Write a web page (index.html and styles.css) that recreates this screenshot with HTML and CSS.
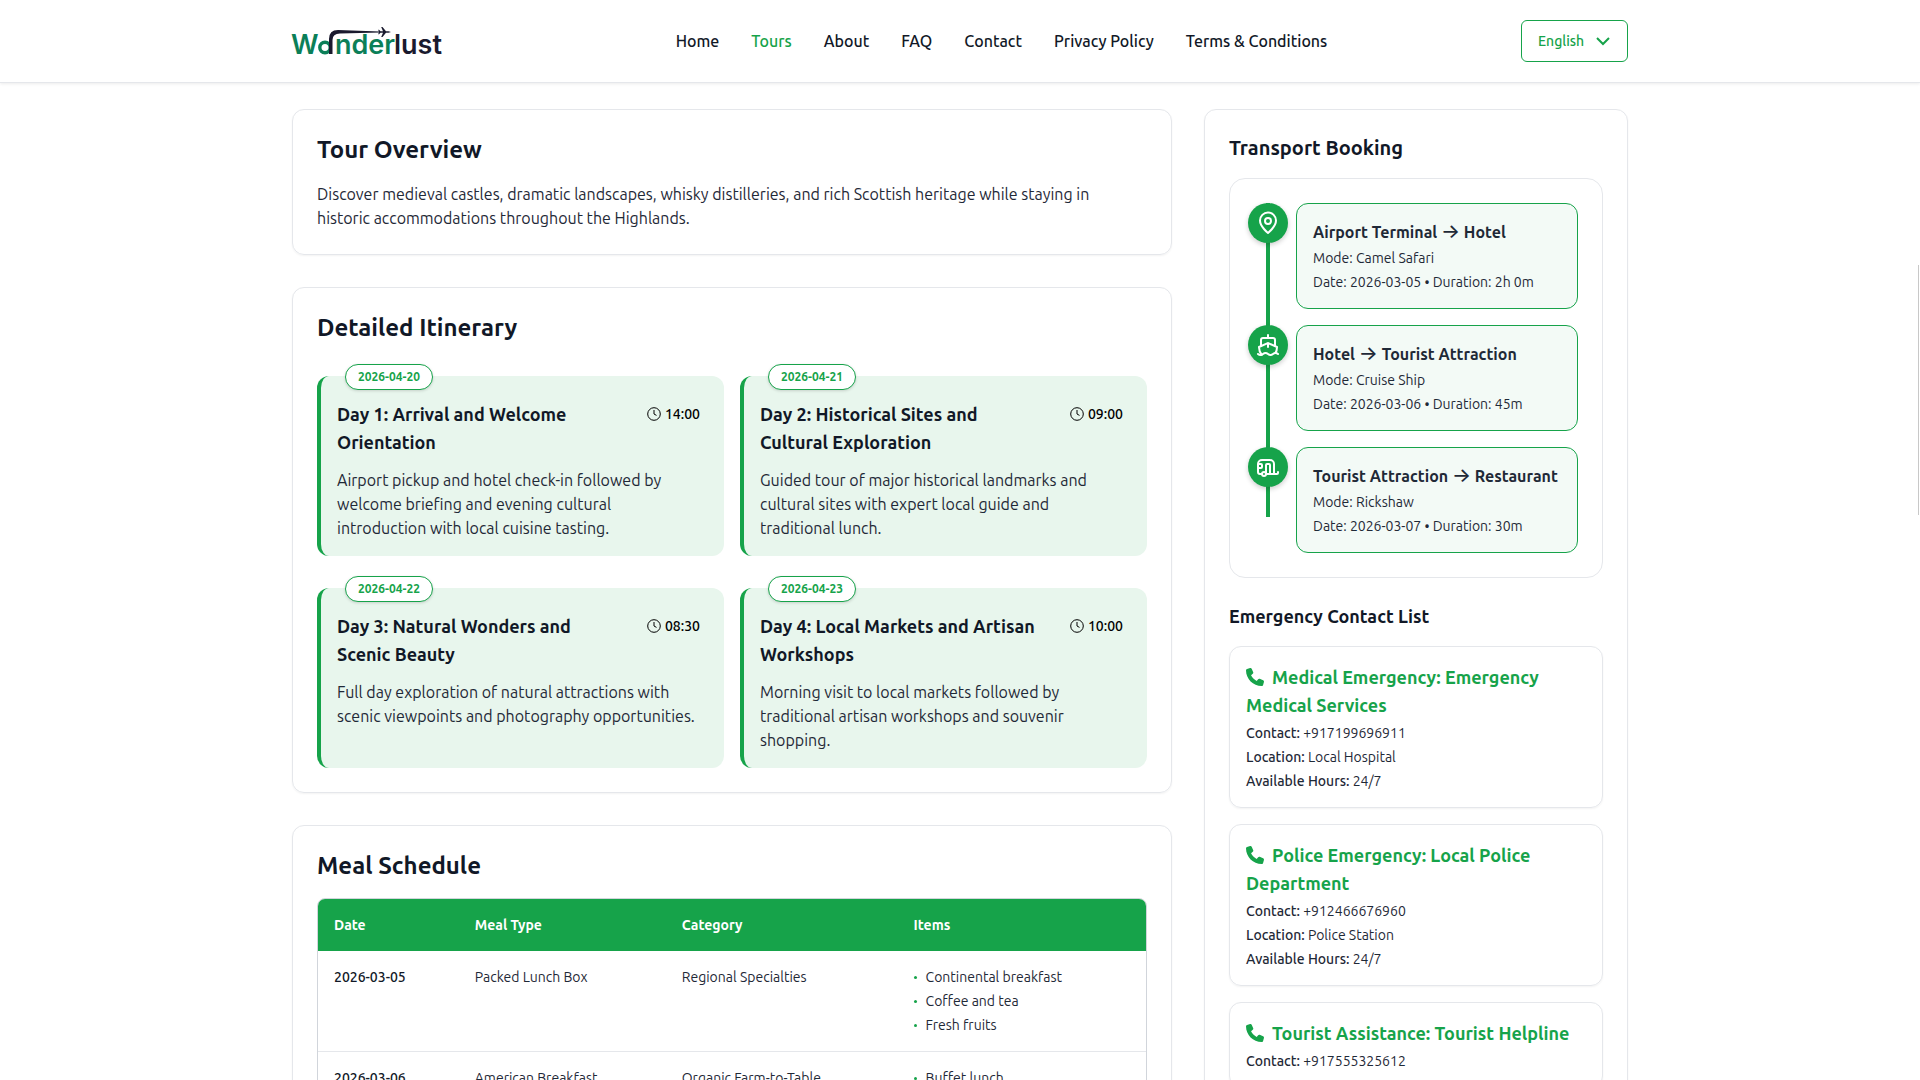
FILE: index.html
```html
<!DOCTYPE html>
<html lang="en">
  <head>
    <meta charset="UTF-8" />
    <meta name="viewport" content="width=device-width, initial-scale=1.0" />
    <title>Wanderlust - Tour Details</title>
    <link rel="stylesheet" href="styles.css">
  </head>
  <body>
    <!-- Header -->
    <header class="header">
      <div class="container header-inner">
        <a class="logo" href="#" aria-label="Wanderlust">
          <svg width="190" height="42" viewBox="0 0 190 42">
            <text class="logo-green" x="-1" y="34">W</text>
            <text class="logo-green" x="43" y="34">nder</text>
            <text class="logo-dark" x="102" y="34">lust</text>
            <circle cx="33" cy="27.500" r="5.200" fill="none" stroke="#0b7f58" stroke-width="3.400" />
            <path d="M37 34V19Q37 10 46 10L88 11.600V12.400L48 13.500Q40.500 13.500 40.500 20V34Z" fill="#1a1a2e" />
            <path d="M99 12L96.500 11.200H94L90.500 7H89.200L91 11.200H88.500L87 9.800H86.200L87 12L86.200 14.200H87L88.500 12.800H91L89.200 17H90.500L94 12.800H96.500Z" fill="#1a1a2e" />
          </svg>
        </a>
        <nav class="nav">
          <a href="#">Home</a>
          <a href="#" class="active">Tours</a>
          <a href="#">About</a>
          <a href="#">FAQ</a>
          <a href="#">Contact</a>
          <a href="#">Privacy Policy</a>
          <a href="#">Terms &amp; Conditions</a>
        </nav>
        <label class="language">
          <select class="language-select" aria-label="Language">
            <option>English</option>
          </select>
          <svg class="chevron" width="16" height="16" viewBox="0 0 16 16"><path d="M2 5l6 6 6-6" /></svg>
        </label>
      </div>
    </header>

    <main class="container layout">
      <div class="main-column">
        <section class="card">
          <h2>Tour Overview</h2>
          <p class="overview">Discover medieval castles, dramatic landscapes, whisky distilleries, and rich Scottish heritage while staying in historic accommodations throughout the Highlands.</p>
        </section>

        <!-- Itinerary -->
        <section class="card">
          <h2>Detailed Itinerary</h2>
          <div class="itinerary">
            <article class="day">
              <span class="day-date">2026-04-20</span>
              <div class="day-head">
                <h3>Day 1: Arrival and Welcome Orientation</h3>
                <span class="day-time">
                  <svg class="clock" width="14" height="14" viewBox="0 0 14 14"><circle cx="7" cy="7" r="6.300" /><path d="M7 3v4l2.500 1.400" /></svg>
                  14:00
                </span>
              </div>
              <p>Airport pickup and hotel check-in followed by welcome briefing and evening cultural introduction with local cuisine tasting.</p>
            </article>
            <article class="day">
              <span class="day-date">2026-04-21</span>
              <div class="day-head">
                <h3>Day 2: Historical Sites and Cultural Exploration</h3>
                <span class="day-time">
                  <svg class="clock" width="14" height="14" viewBox="0 0 14 14"><circle cx="7" cy="7" r="6.300" /><path d="M7 3v4l2.500 1.400" /></svg>
                  09:00
                </span>
              </div>
              <p>Guided tour of major historical landmarks and cultural sites with expert local guide and traditional lunch.</p>
            </article>
            <article class="day">
              <span class="day-date">2026-04-22</span>
              <div class="day-head">
                <h3>Day 3: Natural Wonders and Scenic Beauty</h3>
                <span class="day-time">
                  <svg class="clock" width="14" height="14" viewBox="0 0 14 14"><circle cx="7" cy="7" r="6.300" /><path d="M7 3v4l2.500 1.400" /></svg>
                  08:30
                </span>
              </div>
              <p>Full day exploration of natural attractions with scenic viewpoints and photography opportunities.</p>
            </article>
            <article class="day">
              <span class="day-date">2026-04-23</span>
              <div class="day-head">
                <h3>Day 4: Local Markets and Artisan Workshops</h3>
                <span class="day-time">
                  <svg class="clock" width="14" height="14" viewBox="0 0 14 14"><circle cx="7" cy="7" r="6.300" /><path d="M7 3v4l2.500 1.400" /></svg>
                  10:00
                </span>
              </div>
              <p>Morning visit to local markets followed by traditional artisan workshops and souvenir shopping.</p>
            </article>
          </div>
        </section>

        <!-- Meals -->
        <section class="card">
          <h2>Meal Schedule</h2>
          <div class="table-wrap">
            <table class="meals">
              <thead>
                <tr>
                  <th class="col-date">Date</th>
                  <th class="col-type">Meal Type</th>
                  <th class="col-category">Category</th>
                  <th>Items</th>
                </tr>
              </thead>
              <tbody>
                <tr>
                  <td class="meal-date">2026-03-05</td>
                  <td>Packed Lunch Box</td>
                  <td>Regional Specialties</td>
                  <td>
                    <ul>
                      <li>Continental breakfast</li>
                      <li>Coffee and tea</li>
                      <li>Fresh fruits</li>
                    </ul>
                  </td>
                </tr>
                <tr>
                  <td class="meal-date">2026-03-06</td>
                  <td>American Breakfast</td>
                  <td>Organic Farm-to-Table</td>
                  <td>
                    <ul>
                      <li>Buffet lunch</li>
                    </ul>
                  </td>
                </tr>
              </tbody>
            </table>
          </div>
        </section>
      </div>

      <!-- Sidebar -->
      <aside class="card sidebar">
        <h2>Transport Booking</h2>
        <div class="transport">
          <ol class="timeline">
            <li>
              <span class="stop-icon">
                <svg width="24" height="24" viewBox="0 0 24 24"><path d="M12 22s8-6.500 8-12.500a8 8 0 0 0-16 0C4 15.500 12 22 12 22z" /><circle cx="12" cy="10" r="3" /></svg>
              </span>
              <div class="stop">
                <h3>Airport Terminal <span class="arrow">→</span> Hotel</h3>
                <p>Mode: Camel Safari</p>
                <p>Date: 2026-03-05 • Duration: 2h 0m</p>
              </div>
            </li>
            <li>
              <span class="stop-icon">
                <svg width="24" height="24" viewBox="0 0 24 24"><path d="M12 10.200V14M12 2v3M19 13V7a2 2 0 0 0-2-2H7a2 2 0 0 0-2 2v6" /><path d="M19.400 20A11.600 11.600 0 0 0 21 14l-8.200-3.600a2 2 0 0 0-1.600 0L3 14a11.600 11.600 0 0 0 2.800 7.800" /><path d="M2 21c.6.500 1.200 1 2.500 1 2.500 0 2.500-2 5-2 1.300 0 1.900.5 2.500 1s1.200 1 2.500 1c2.500 0 2.500-2 5-2 1.300 0 1.900.5 2.500 1" /></svg>
              </span>
              <div class="stop">
                <h3>Hotel <span class="arrow">→</span> Tourist Attraction</h3>
                <p>Mode: Cruise Ship</p>
                <p>Date: 2026-03-06 • Duration: 45m</p>
              </div>
            </li>
            <li>
              <span class="stop-icon">
                <svg width="24" height="24" viewBox="0 0 24 24"><path d="M18 19V9a4 4 0 0 0-4-4H6a4 4 0 0 0-4 4v8a2 2 0 0 0 2 2h2M2 9h3a1 1 0 0 1 1 1v2a1 1 0 0 1-1 1H2M22 17v1a1 1 0 0 1-1 1H10v-9a1 1 0 0 1 1-1h2a1 1 0 0 1 1 1v9" /><circle cx="8" cy="19" r="2" /></svg>
              </span>
              <div class="stop">
                <h3>Tourist Attraction <span class="arrow">→</span> Restaurant</h3>
                <p>Mode: Rickshaw</p>
                <p>Date: 2026-03-07 • Duration: 30m</p>
              </div>
            </li>
          </ol>
        </div>

        <h3 class="contacts-title">Emergency Contact List</h3>
        <div class="contacts">
          <article class="contact">
            <h4><svg class="phone" width="18" height="18" viewBox="0 0 512 512"><path d="M165 25c-8-19-28-29-48-23L29 26C12 30 0 46 0 64c0 247 201 448 448 448 18 0 34-12 38-29l24-88c6-20-4-40-23-48l-96-40c-16-7-35-2-46 12l-41 49c-70-33-127-90-160-160l49-41c14-11 19-30 12-46z" /></svg>Medical Emergency: Emergency Medical Services</h4>
            <p><strong>Contact:</strong> +917199696911</p>
            <p><strong>Location:</strong> Local Hospital</p>
            <p><strong>Available Hours:</strong> 24/7</p>
          </article>
          <article class="contact">
            <h4><svg class="phone" width="18" height="18" viewBox="0 0 512 512"><path d="M165 25c-8-19-28-29-48-23L29 26C12 30 0 46 0 64c0 247 201 448 448 448 18 0 34-12 38-29l24-88c6-20-4-40-23-48l-96-40c-16-7-35-2-46 12l-41 49c-70-33-127-90-160-160l49-41c14-11 19-30 12-46z" /></svg>Police Emergency: Local Police Department</h4>
            <p><strong>Contact:</strong> +912466676960</p>
            <p><strong>Location:</strong> Police Station</p>
            <p><strong>Available Hours:</strong> 24/7</p>
          </article>
          <article class="contact">
            <h4><svg class="phone" width="18" height="18" viewBox="0 0 512 512"><path d="M165 25c-8-19-28-29-48-23L29 26C12 30 0 46 0 64c0 247 201 448 448 448 18 0 34-12 38-29l24-88c6-20-4-40-23-48l-96-40c-16-7-35-2-46 12l-41 49c-70-33-127-90-160-160l49-41c14-11 19-30 12-46z" /></svg>Tourist Assistance: Tourist Helpline</h4>
            <p><strong>Contact:</strong> +917555325612</p>
          </article>
        </div>
      </aside>
    </main>
    <div class="scroll-thumb"></div>
  </body>
</html>
```
FILE: styles.css
```css
* {
  box-sizing: border-box;
  margin: 0;
  padding: 0;
}

body {
  height: 100vh;
  overflow: hidden;
  background-color: #fff;
  color: #1f2937;
  font-family: Ubuntu, "Noto Sans", sans-serif;
  font-size: 16px;
  line-height: 24px;
}

a {
  color: inherit;
  text-decoration: none;
}

ul,
ol {
  list-style: none;
}

.container {
  max-width: 1400px;
  margin: 0 auto;
  padding: 0 32px;
}

/* Header */
.header {
  border-bottom: 1px solid #e5e7eb;
  box-shadow: 0 1px 3px rgba(0, 0, 0, 0.08);
}

.header-inner {
  display: flex;
  align-items: center;
  justify-content: space-between;
  padding-top: 20px;
  padding-bottom: 20px;
}

.logo {
  display: flex;
}

.logo svg {
  overflow: visible;
}

.logo text {
  font-family: Inter, sans-serif;
  font-size: 27px;
  font-weight: 600;
}

.logo-green {
  fill: #0b7f58;
}

.logo-dark {
  fill: #1a1a2e;
}

.nav {
  display: flex;
  gap: 32px;
  color: #111827;
  font-weight: 500;
}

.nav .active {
  color: #16a34a;
}

.language {
  display: flex;
  align-items: center;
  gap: 10px;
  height: 42px;
  padding: 0 16px;
  border: 1px solid #16a34a;
  border-radius: 6px;
  color: #16a34a;
}

.language-select {
  appearance: none;
  border: none;
  background: none;
  color: inherit;
  font: inherit;
  font-size: 14px;
  font-weight: 500;
}

.chevron {
  fill: none;
  stroke: #16a34a;
  stroke-width: 2;
}

/* Page layout */
.layout {
  display: grid;
  grid-template-columns: repeat(3, minmax(0, 1fr));
  align-items: start;
  gap: 32px;
  padding-top: 26px;
}

.main-column {
  display: flex;
  flex-direction: column;
  grid-column: span 2;
  gap: 32px;
}

.card {
  padding: 24px;
  border: 1px solid #e5e7eb;
  border-radius: 12px;
  box-shadow: 0 1px 2px rgba(0, 0, 0, 0.05);
}

.card h2 {
  margin-bottom: 16px;
  color: #111827;
  font-size: 24px;
  font-weight: 700;
  line-height: 32px;
}

.overview {
  max-width: 820px;
}

/* Itinerary */
.itinerary {
  display: grid;
  grid-template-columns: 1fr 1fr;
  gap: 32px 16px;
  padding-top: 16px;
}

.day {
  position: relative;
  padding: 24px 24px 16px 16px;
  border-left: 4px solid #16a34a;
  border-radius: 12px;
  background-color: #e8f6ed;
}

.day-date {
  position: absolute;
  top: -12px;
  left: 24px;
  padding: 4px 12px;
  border: 1px solid #16a34a;
  border-radius: 13px;
  background-color: #fff;
  box-shadow: 0 1px 3px rgba(0, 0, 0, 0.15);
  color: #16a34a;
  font-size: 12px;
  font-weight: 700;
  line-height: 16px;
}

.day-head {
  display: flex;
  align-items: flex-start;
  justify-content: space-between;
  gap: 24px;
  margin-bottom: 12px;
}

.day h3 {
  color: #111827;
  font-size: 18px;
  font-weight: 700;
  line-height: 28px;
}

.day-time {
  display: flex;
  align-items: center;
  gap: 4px;
  color: #000;
  font-size: 14px;
  font-weight: 500;
  line-height: 28px;
}

.clock {
  fill: none;
  stroke: currentColor;
}

/* Meal table */
.table-wrap {
  overflow: hidden;
  border: 1px solid #d1d5db;
  border-radius: 8px;
}

.meals {
  width: 100%;
  border-collapse: collapse;
  table-layout: fixed;
  font-size: 14px;
  line-height: 20px;
  text-align: left;
}

.meals th {
  padding: 16px;
  background-color: #16a34a;
  color: #fff;
  font-weight: 700;
}

.meals td {
  padding: 16px;
  vertical-align: top;
}

.meals tbody tr {
  border-bottom: 1px solid #e5e7eb;
}

.col-date {
  width: 17%;
}

.col-type {
  width: 25%;
}

.col-category {
  width: 28%;
}

.meals .meal-date {
  color: #111827;
  font-weight: 500;
}

.meals ul {
  display: flex;
  flex-direction: column;
  gap: 4px;
}

.meals li {
  display: flex;
  align-items: center;
  gap: 9px;
}

.meals li::before {
  content: "";
  width: 3px;
  height: 3px;
  border-radius: 50%;
  background-color: #16a34a;
}

/* Transport */
.sidebar h2 {
  font-size: 20px;
  line-height: 28px;
}

.transport {
  padding: 24px 24px 24px 18px;
  border: 1px solid #e5e7eb;
  border-radius: 16px;
}

.timeline {
  position: relative;
  display: flex;
  flex-direction: column;
  gap: 16px;
}

/* Line behind the stop icons */
.timeline::before {
  content: "";
  position: absolute;
  top: 0;
  bottom: 36px;
  left: 18px;
  width: 4px;
  background-color: #16a34a;
}

.timeline li {
  display: flex;
  align-items: flex-start;
  gap: 8px;
}

.stop-icon {
  position: relative;
  display: flex;
  flex-shrink: 0;
  align-items: center;
  justify-content: center;
  width: 40px;
  height: 40px;
  border-radius: 50%;
  background-color: #16a34a;
  box-shadow: 0 2px 5px rgba(0, 0, 0, 0.2);
}

.stop-icon svg {
  fill: none;
  stroke: #fff;
  stroke-width: 2;
  stroke-linecap: round;
  stroke-linejoin: round;
}

.stop {
  flex: 1;
  padding: 16px;
  border: 1px solid #16a34a;
  border-radius: 12px;
  background-color: #f3faf6;
}

.stop h3 {
  font-size: 16px;
  font-weight: 700;
  white-space: nowrap;
}

.arrow {
  font-family: Inter, sans-serif;
  font-size: 20px;
  font-weight: 500;
  line-height: 16px;
}

.stop p,
.contact p {
  margin-top: 4px;
  font-size: 14px;
  line-height: 20px;
}

/* Emergency contacts */
.contacts-title {
  margin: 24px 0 16px;
  color: #111827;
  font-size: 18px;
  font-weight: 700;
  line-height: 28px;
}

.contacts {
  display: flex;
  flex-direction: column;
  gap: 16px;
}

.contact {
  padding: 16px;
  border: 1px solid #e5e7eb;
  border-radius: 12px;
  box-shadow: 0 1px 2px rgba(0, 0, 0, 0.05);
}

.contact h4 {
  color: #16a34a;
  font-size: 18px;
  font-weight: 700;
  line-height: 28px;
}

.contact strong {
  font-weight: 500;
}

.phone {
  margin-right: 8px;
  fill: #16a34a;
  vertical-align: -2px;
}

.scroll-thumb {
  position: fixed;
  top: 265px;
  right: 1px;
  width: 1px;
  height: 250px;
  background-color: #c8c8c8;
}
```
